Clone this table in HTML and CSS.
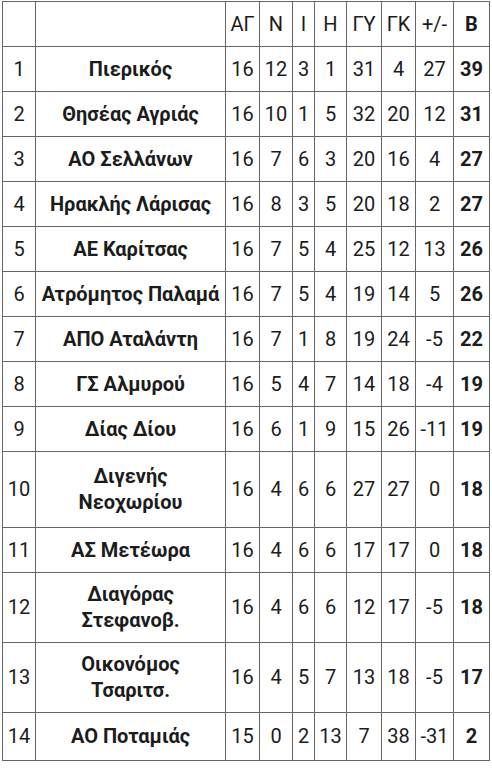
FILE: index.html
```html
<!DOCTYPE html>
<html lang="el">
<head>
<meta charset="utf-8">
<link rel="stylesheet" href="styles.css">
</head>
<body>
<table class="standings">
<colgroup>
<col class="c-rank"><col class="c-team"><col class="c-ag"><col class="c-n"><col class="c-i"><col class="c-h"><col class="c-gy"><col class="c-gk"><col class="c-diff"><col class="c-pts">
</colgroup>
<thead>
<tr><th></th><th></th><th>ΑΓ</th><th>Ν</th><th>Ι</th><th>Η</th><th>ΓΥ</th><th>ΓΚ</th><th>+/-</th><th class="pts">Β</th></tr>
</thead>
<tbody>
<tr><td>1</td><td class="team">Πιερικός</td><td>16</td><td>12</td><td>3</td><td>1</td><td>31</td><td>4</td><td>27</td><td class="pts">39</td></tr>
<tr><td>2</td><td class="team">Θησέας Αγριάς</td><td>16</td><td>10</td><td>1</td><td>5</td><td>32</td><td>20</td><td>12</td><td class="pts">31</td></tr>
<tr><td>3</td><td class="team">ΑΟ Σελλάνων</td><td>16</td><td>7</td><td>6</td><td>3</td><td>20</td><td>16</td><td>4</td><td class="pts">27</td></tr>
<tr><td>4</td><td class="team">Ηρακλής Λάρισας</td><td>16</td><td>8</td><td>3</td><td>5</td><td>20</td><td>18</td><td>2</td><td class="pts">27</td></tr>
<tr><td>5</td><td class="team">ΑΕ Καρίτσας</td><td>16</td><td>7</td><td>5</td><td>4</td><td>25</td><td>12</td><td>13</td><td class="pts">26</td></tr>
<tr><td>6</td><td class="team">Ατρόμητος Παλαμά</td><td>16</td><td>7</td><td>5</td><td>4</td><td>19</td><td>14</td><td>5</td><td class="pts">26</td></tr>
<tr><td>7</td><td class="team">ΑΠΟ Αταλάντη</td><td>16</td><td>7</td><td>1</td><td>8</td><td>19</td><td>24</td><td>-5</td><td class="pts">22</td></tr>
<tr><td>8</td><td class="team">ΓΣ Αλμυρού</td><td>16</td><td>5</td><td>4</td><td>7</td><td>14</td><td>18</td><td>-4</td><td class="pts">19</td></tr>
<tr><td>9</td><td class="team">Δίας Δίου</td><td>16</td><td>6</td><td>1</td><td>9</td><td>15</td><td>26</td><td>-11</td><td class="pts">19</td></tr>
<tr class="tall"><td>10</td><td class="team">Διγενής<br>Νεοχωρίου</td><td>16</td><td>4</td><td>6</td><td>6</td><td>27</td><td>27</td><td>0</td><td class="pts">18</td></tr>
<tr><td>11</td><td class="team">ΑΣ Μετέωρα</td><td>16</td><td>4</td><td>6</td><td>6</td><td>17</td><td>17</td><td>0</td><td class="pts">18</td></tr>
<tr class="double"><td>12</td><td class="team">Διαγόρας<br>Στεφανοβ.</td><td>16</td><td>4</td><td>6</td><td>6</td><td>12</td><td>17</td><td>-5</td><td class="pts">18</td></tr>
<tr class="double"><td>13</td><td class="team">Οικονόμος<br>Τσαριτσ.</td><td>16</td><td>4</td><td>5</td><td>7</td><td>13</td><td>18</td><td>-5</td><td class="pts">17</td></tr>
<tr class="last"><td>14</td><td class="team">ΑΟ Ποταμιάς</td><td>15</td><td>0</td><td>2</td><td>13</td><td>7</td><td>38</td><td>-31</td><td class="pts">2</td></tr>
</tbody>
</table>
</body>
</html>
```

FILE: styles.css
```css
html, body {
  margin: 0;
  padding: 0;
  background: #ffffff;
}

body {
  padding: 1px 0 0 2px;
  font-family: Roboto, "Noto Sans", "Liberation Sans", sans-serif;
  color: #1c1c1c;
}

.standings {
  border-collapse: collapse;
  table-layout: fixed;
  width: 488px;
  border: 1px solid #666666;
  font-size: 20px;
}

.c-rank { width: 33px; }
.c-team { width: 190px; }
.c-ag { width: 34px; }
.c-n { width: 33px; }
.c-i { width: 22px; }
.c-h { width: 32px; }
.c-gy { width: 35px; }
.c-gk { width: 34px; }
.c-diff { width: 38px; }
.c-pts { width: 36px; }

.standings th,
.standings td {
  border: 1px solid #666666;
  padding: 9px 0;
  line-height: 26px;
  text-align: center;
  vertical-align: middle;
  font-weight: 400;
  white-space: nowrap;
}

.standings .team,
.standings .pts {
  font-weight: 700;
}

.standings .tall td {
  padding: 11px 0 12px;
}

.standings .double td {
  padding: 8px 0 9px;
}

.standings .last td {
  padding: 10px 0 11px;
}
```
